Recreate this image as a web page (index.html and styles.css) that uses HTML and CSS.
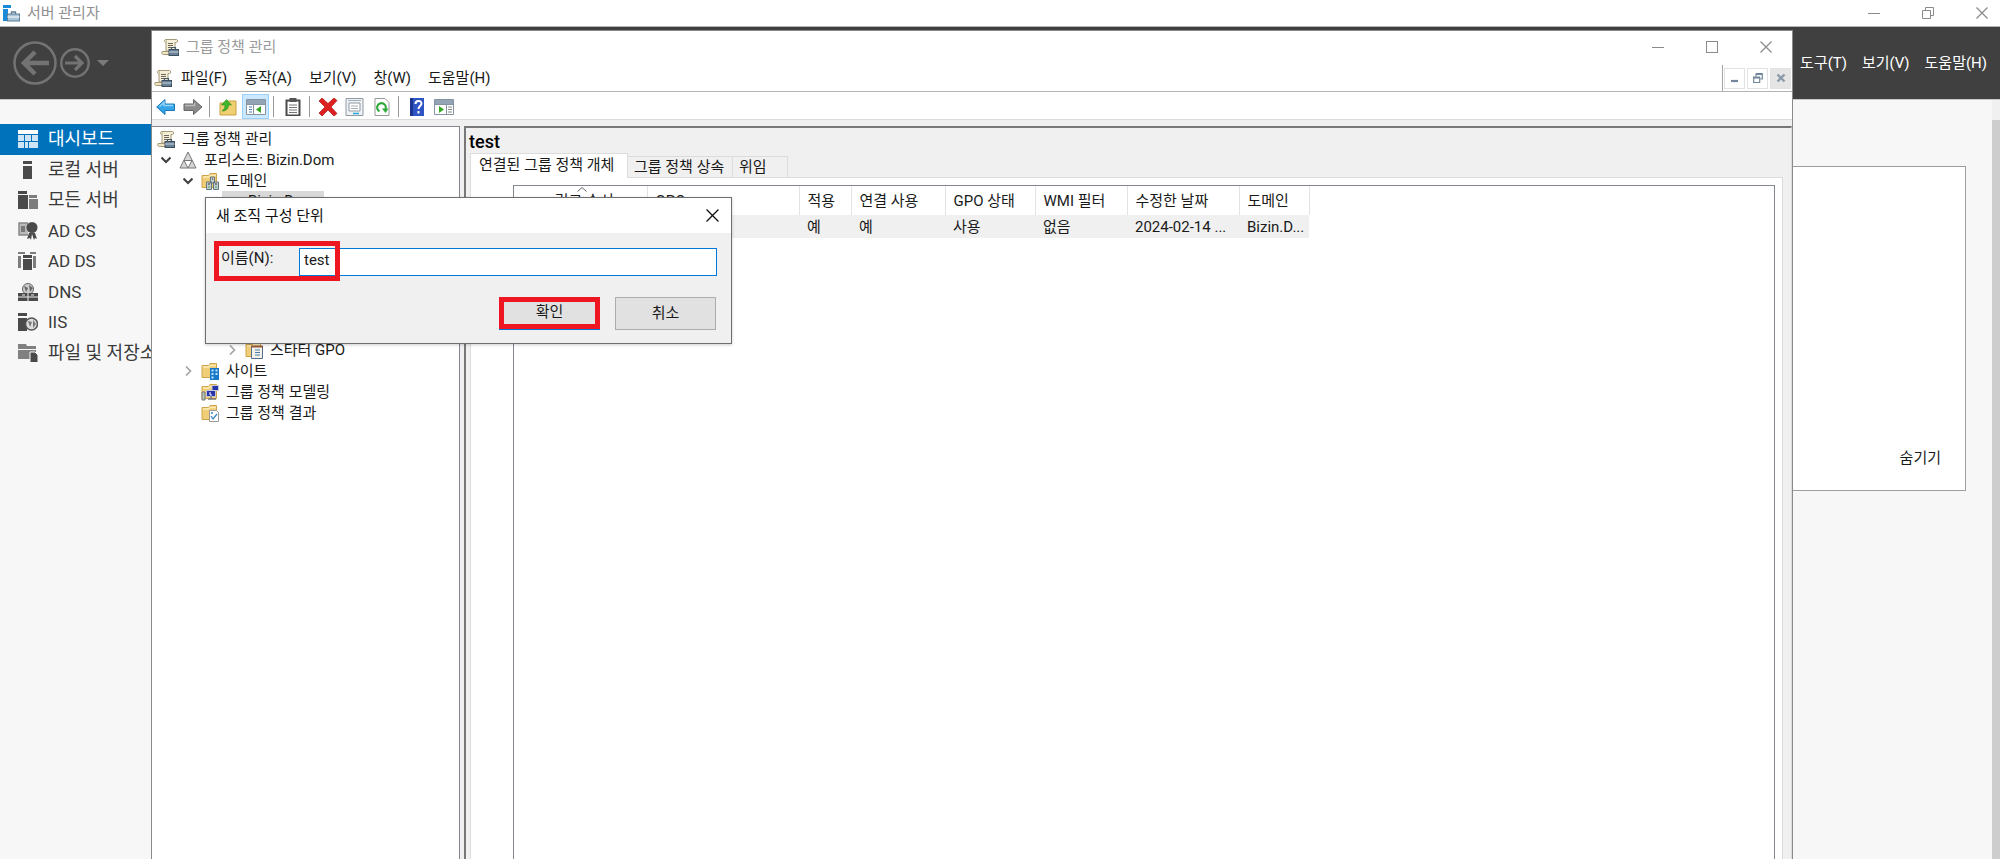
FILE: index.html
```html
<!DOCTYPE html>
<html lang="ko">
<head>
<meta charset="utf-8">
<title>서버 관리자</title>
<link rel="stylesheet" href="styles.css">
</head>
<body>
<svg class="defs" aria-hidden="true">
  <symbol id="scroll" viewBox="0 0 18 18">
    <path d="M5 1.500h10.500c1.500 0 1.500 3 0 3H14V13H5z" fill="#f6efd8" stroke="#a39878"/>
    <path d="M5 1.500c-2 0-2 3 0 3" fill="#efe4c0" stroke="#a39878"/>
    <path d="M7 5.500h5M7 7.500h5M7 9.500h3" stroke="#6b6657"/>
    <path d="M1 13.500h9v3H2.500C.5 16.500.5 14.500 1 13.500z" fill="#efe4c0" stroke="#a39878"/>
    <path d="M10.500 11V9.500h4V11" fill="none" stroke="#46596b" stroke-width="1.200"/>
    <rect x="8" y="11.500" width="9.500" height="6" fill="#6a8196" stroke="#3c4f60"/>
    <path d="M8 14h9.500" stroke="#c9d5de"/>
  </symbol>
  <symbol id="folder" viewBox="0 0 18 18">
    <path d="M1 3.500h7l1-2h6.500v14H1z" fill="#f0ce78" stroke="#d0a548"/>
    <path d="M2 5h5.500l1.500-1.500H15" fill="none" stroke="#fbeab8" stroke-width="1.500"/>
  </symbol>
  <symbol id="open" viewBox="0 0 10 10"><path d="M.5 2.500L5 7l4.500-4.500" fill="none" stroke="#404040" stroke-width="2"/></symbol>
  <symbol id="shut" viewBox="0 0 10 10"><path d="M3 .5L7.500 5 3 9.500" fill="none" stroke="#a6a6a6" stroke-width="1.700"/></symbol>
  <symbol id="min" viewBox="0 0 12 12"><path d="M0 6.500h12" stroke="currentColor" fill="none"/></symbol>
  <symbol id="max" viewBox="0 0 12 12"><rect x=".5" y=".5" width="11" height="11" stroke="currentColor" fill="none"/></symbol>
  <symbol id="restore" viewBox="0 0 12 12"><path d="M.5 3.500h8v8h-8zM3.500 3V.5h8v8H9" stroke="currentColor" fill="none"/></symbol>
  <symbol id="close" viewBox="0 0 12 12"><path d="M.5.5l11 11M11.500.5l-11 11" stroke="currentColor" fill="none" stroke-width="1.200"/></symbol>
</svg>

<div class="manager">
  <header class="titlebar">
    <svg class="app-icon" viewBox="0 0 17 17"><path d="M0 0h8v3H0zM0 4h5v12H0z" fill="#1a8ad8"/><path d="M8.500 9V7h4v2" fill="none" stroke="#5b7c96" stroke-width="1.300"/><rect x="4.500" y="9" width="12" height="7" fill="#a9c4d6" stroke="#5b7c96"/><path d="M4.500 12h12" stroke="#fff"/></svg>
    <span class="titlebar-text">서버 관리자</span>
    <div class="controls">
      <button aria-label="최소화"><svg><use href="#min"/></svg></button>
      <button aria-label="이전 크기로"><svg><use href="#restore"/></svg></button>
      <button aria-label="닫기"><svg><use href="#close"/></svg></button>
    </div>
  </header>
  <div class="banner">
    <button class="nav-big" aria-label="뒤로"><svg viewBox="0 0 44 44"><circle cx="22" cy="22" r="20.500" fill="none" stroke="#737373" stroke-width="2.500"/><path d="M36 22H12M22 11L11 22l11 11" fill="none" stroke="#737373" stroke-width="4.500"/></svg></button>
    <button class="nav-small" aria-label="앞으로"><svg viewBox="0 0 30 30"><circle cx="15" cy="15" r="13.700" fill="none" stroke="#737373" stroke-width="2.400"/><path d="M5 15h17M15 8l7 7-7 7" fill="none" stroke="#737373" stroke-width="3.200"/></svg></button>
    <button class="nav-drop" aria-label="기록"><svg viewBox="0 0 12 8"><path d="M0 1h12L6 7z" fill="#7a7a7a"/></svg></button>
    <nav class="banner-menu"><button>도구(T)</button><button>보기(V)</button><button>도움말(H)</button></nav>
  </div>
  <div class="manager-body">
    <nav class="side">
      <a href="#" class="ko current"><svg viewBox="0 0 20 18"><path d="M0 0h20v4H0z" fill="#fff"/><path d="M0 5h6v6H0zM0 12h6v6H0zM7 5h6v6H7zM14 5h6v6h-6zM7 12h3v6H7zM11 12h9v6h-9z" fill="#cfe4f5"/></svg>대시보드</a>
      <a href="#" class="ko"><svg viewBox="0 0 20 18"><path d="M5 0h9v3H5zM5 5h9v13H5z" fill="#4a4a4a"/></svg>로컬 서버</a>
      <a href="#" class="ko"><svg viewBox="0 0 20 18"><path d="M0 0h9v3H0zM0 4h10v14H0z" fill="#4a4a4a"/><path d="M11 4h8v3h-8zM11 8h9v10h-9z" fill="#7d7d7d"/></svg>모든 서버</a>
      <a href="#"><svg viewBox="0 0 20 18"><path d="M10 1H1v12h9" fill="#bbb" stroke="#888" stroke-width="1.500"/><path d="M3 4h4v6H3z" fill="#777"/><circle cx="14" cy="5.500" r="5.500" fill="#4a4a4a"/><path d="M11 11l-2 6 3-1 1 2 1-6 2 6 1-2 2 1-2-6z" fill="#4a4a4a"/></svg>AD CS</a>
      <a href="#"><svg viewBox="0 0 20 18"><path d="M0 0h7v2H0zM0 4h3v12H0zM12 0h6v2h-6zM15 4h3v12h-3z" fill="#7d7d7d"/><path d="M5 3h9v3H5zM5 7h9v11H5z" fill="#4a4a4a"/></svg>AD DS</a>
      <a href="#"><svg viewBox="0 0 20 18"><circle cx="10" cy="6" r="5.500" fill="#ccc" stroke="#666"/><path d="M6 3l4 2-2 4zM11 2l4 3-3 4z" fill="#666"/><path d="M0 10h20v8H0z" fill="#4a4a4a"/><path d="M0 14h20M10 10v8M4 12h3M13 12h3" stroke="#eee"/></svg>DNS</a>
      <a href="#"><svg viewBox="0 0 20 18"><path d="M0 0h9v3H0zM0 5h9v13H0z" fill="#4a4a4a"/><circle cx="13.500" cy="11" r="6" fill="#ddd" stroke="#555" stroke-width="1.500"/><path d="M10 8l4 1-2 5zM15 7l3 4-3 4z" fill="#777"/></svg>IIS</a>
      <a href="#" class="ko"><svg viewBox="0 0 20 18"><path d="M0 0h8l1 2h9v3H0zM0 6h18v2h-6v7H0z" fill="#808080"/><path d="M12 8h5l3 3v8h-8z" fill="#4a4a4a" stroke="#f7f7f7"/></svg>파일 및 저장소</a>
    </nav>
    <main class="dash"><section class="welcome"><button>숨기기</button></section></main>
    <div class="scrollbar"><i></i></div>
  </div>
</div>

<div class="gpm">
  <header class="gpm-title">
    <svg class="icon"><use href="#scroll"/></svg><span class="titlebar-text">그룹 정책 관리</span>
    <div class="controls">
      <button aria-label="최소화"><svg><use href="#min"/></svg></button>
      <button aria-label="최대화"><svg><use href="#max"/></svg></button>
      <button aria-label="닫기"><svg><use href="#close"/></svg></button>
    </div>
  </header>
  <div class="menubar">
    <svg class="icon"><use href="#scroll"/></svg>
    <nav class="menus"><button>파일(F)</button><button>동작(A)</button><button>보기(V)</button><button>창(W)</button><button>도움말(H)</button></nav>
    <div class="mdi">
      <button aria-label="창 최소화"><svg viewBox="0 0 10 10"><path d="M1 8h7" stroke="#71859b" stroke-width="2.200"/></svg></button>
      <button aria-label="창 복원"><svg viewBox="0 0 10 10"><path d="M.7 4.500h6v5h-6zM3 3.500V1h6.300v5H7.500" fill="none" stroke="#71859b" stroke-width="1.200"/><path d="M0 4.500h7M3 1h6.500" stroke="#71859b" stroke-width="2"/></svg></button>
      <button class="off" aria-label="창 닫기"><svg viewBox="0 0 10 10"><path d="M1.500 1.500l7 7M8.500 1.500l-7 7" stroke="#8a9bab" stroke-width="2.400"/></svg></button>
    </div>
  </div>
  <div class="toolbar">
    <button aria-label="뒤로"><svg viewBox="0 0 20 18"><path d="M.7 9L9 1.500V6h9.500v6.500H9v4z" fill="#35a5e6" stroke="#1d78b8"/><path d="M3.500 8.500L8 4.500V7.500h9" fill="none" stroke="#8fd4f8" stroke-width="1.500"/></svg></button>
    <button class="gap-s" aria-label="앞으로"><svg viewBox="0 0 20 18"><path d="M19 9l-8.500-7.500V6H1v6.500h9.500v4z" fill="#8b8b8b" stroke="#666"/><path d="M2 7.500h9.500V5" fill="none" stroke="#bbb" stroke-width="1.500"/></svg></button>
    <hr>
    <button class="gap-m" aria-label="위로"><svg viewBox="0 0 20 18"><path d="M2 5h6l2-2h8v14H2z" fill="#f0cf73" stroke="#c9a145"/><path d="M4 13c2-1 3-4 3-6H3.500l5-5.500 5 5.500H10.500c0 4-2.500 6-6.500 6z" fill="#41b52c" stroke="#2a8c1b" stroke-width=".6"/></svg></button>
    <button class="on" aria-label="콘솔 트리 표시"><svg viewBox="0 0 20 18"><path d="M.5 1.500h19v15H.5z" fill="#fff" stroke="#8693a3"/><path d="M1 2h18v4H1z" fill="#94a3b5"/><path d="M7.500 6v11M1 6.500h18" stroke="#8693a3"/><path d="M3 9h3M3 11.500h3M3 14h3" stroke="#4d7fb5"/><path d="M15 8v7l-5-3.500z" fill="#35a822"/></svg></button>
    <hr>
    <button class="gap-s" aria-label="붙여넣기"><svg viewBox="0 0 20 18"><path d="M3.500 2.500h13v15h-13z" fill="#fff" stroke="#4a4a4a" stroke-width="2"/><path d="M6.500 0h7v4h-7z" fill="#555"/><path d="M6 7h8M6 9.500h8M6 12h8M6 14.500h8" stroke="#777"/></svg></button>
    <hr>
    <button class="gap-m" aria-label="삭제"><svg viewBox="0 0 20 18"><path d="M1 3l3-3 6 5.500L16 0l3 2.500L13 9l6 6.500-3 2.500-6-6-6 6-3-3L7 9z" fill="#df2020" stroke="#a91111" stroke-width=".7"/></svg></button>
    <button class="gap-s" aria-label="속성"><svg viewBox="0 0 20 18"><path d="M1 .5h17v17H1z" fill="#eef2f5" stroke="#8f99a3"/><path d="M4 5h11v8H4z" fill="#fff" stroke="#8f99a3"/><path d="M3 2.500h13M6 8h7M6 10.500h7" stroke="#a5afb8"/><path d="M8 15.500h6" stroke="#28a4df" stroke-width="1.500"/></svg></button>
    <button class="gap-s" aria-label="새로 고침"><svg viewBox="0 0 20 18"><path d="M3 .5h10l4 4v13H3z" fill="#fff" stroke="#999"/><path d="M7.500 13.300a4.300 4.300 0 1 1 6-2.300" fill="none" stroke="#2fa83a" stroke-width="2.200"/><path d="M10 10.500h6.500l-3 4.500z" fill="#2fa83a"/></svg></button>
    <hr>
    <button class="gap-m" aria-label="도움말"><svg viewBox="0 0 20 18"><path d="M3 0h14v18H3z" fill="#2f55c4"/><path d="M3 0h3v18H3z" fill="#1b3690"/><path d="M8.500 6c0-4 6-4 6-.5 0 2.500-3 2.500-3 5.500M11.500 13v2.500" fill="none" stroke="#fff" stroke-width="2"/></svg></button>
    <button class="gap-s" aria-label="작업 창 표시"><svg viewBox="0 0 20 18"><path d="M.5 1.500h19v15H.5z" fill="#fff" stroke="#8693a3"/><path d="M1 2h18v4H1z" fill="#94a3b5"/><path d="M12.500 6v11M1 6.500h18" stroke="#8693a3"/><path d="M14 9h4M14 11.500h4M14 14h4" stroke="#888"/><path d="M5 8v7l5-3.500z" fill="#35a822"/></svg></button>
  </div>
  <div class="panes">
    <div class="tree">
      <div class="node root"><svg class="icon"><use href="#scroll"/></svg>그룹 정책 관리</div>
      <div class="node l1"><svg class="arrow"><use href="#open"/></svg><svg class="icon" viewBox="0 0 18 18"><path d="M9 1l8 16H1z" fill="#d6d6d6" stroke="#777"/><path d="M5 9.500h8L9 17z" fill="#fff" stroke="#777"/></svg>포리스트: Bizin.Dom</div>
      <div class="node l2"><svg class="arrow"><use href="#open"/></svg><svg class="icon" viewBox="0 0 18 18"><use href="#folder"/><path d="M9.500 5h4v6h-4zM5.500 10h5v7.500h-5zM12.500 10h5v7.500h-5z" fill="#c3ced2" stroke="#65757c"/><path d="M7 12h2M14 12h2M11 7h1" stroke="#333"/><path d="M7 15h2M14 15h2" stroke="#44a53c"/></svg>도메인</div>
      <div class="node l3"><svg class="icon" viewBox="0 0 18 18"><path d="M6 1h7v16H6z" fill="#b8c8d0" stroke="#65757c"/></svg><span class="picked">Bizin.Dom</span></div>
      <div class="node l4 starter"><svg class="arrow"><use href="#shut"/></svg><svg class="icon" viewBox="0 0 18 18"><use href="#folder"/><path d="M6.500 5.500h11v12h-11z" fill="#f5f1e8" stroke="#506f8d"/><path d="M6 5.500h12" stroke="#935b42" stroke-width="2"/><path d="M10 9h5M10 11.500h5M10 14h5" stroke="#477eae"/></svg>스타터 GPO</div>
      <div class="node l2"><svg class="arrow"><use href="#shut"/></svg><svg class="icon" viewBox="0 0 18 18"><use href="#folder"/><path d="M9 6h9v12H9z" fill="#1878c8"/><path d="M10.500 8.500h2M14.500 8.500h2M10.500 12h2M14.500 12h2M10.500 15.500h2" stroke="#bfe5ff" stroke-width="2"/></svg>사이트</div>
      <div class="node l2"><svg class="icon" viewBox="0 0 18 18"><use href="#folder"/><path d="M11 2.500h6.500v5H11zM5.500 7.500h9v6h-9z" fill="#2735a8" stroke="#c5cad8"/><path d="M1 9h3v8H1z" fill="#b6c6b6" stroke="#777"/><path d="M7 16h8M10 13v3" stroke="#777" stroke-width="1.500"/><path d="M9 9v3h2" stroke="#fff" fill="none"/></svg>그룹 정책 모델링</div>
      <div class="node l2"><svg class="icon" viewBox="0 0 18 18"><use href="#folder"/><path d="M8.500 6.500h7l2 2v9h-9z" fill="#fff" stroke="#999"/><path d="M10 12l2 3 4-5M10 9h2" fill="none" stroke="#3a85c0" stroke-width="1.300"/></svg>그룹 정책 결과</div>
    </div>
    <section class="detail">
      <h1>test</h1>
      <div class="tabs" role="tablist"><button class="tab active" role="tab">연결된 그룹 정책 개체</button><button class="tab t2" role="tab">그룹 정책 상속</button><button class="tab t3" role="tab">위임</button></div>
      <div class="sheet">
        <div class="list">
          <table>
            <colgroup><col class="c1"><col class="c2"><col class="c3"><col class="c4"><col class="c5"><col class="c6"><col class="c7"><col class="c8"></colgroup>
            <thead><tr><th class="mid"><svg class="sort" viewBox="0 0 10 5"><path d="M.5 4.500L5 .5l4.500 4" fill="none" stroke="#666"/></svg>링크 순서</th><th>GPO</th><th>적용</th><th>연결 사용</th><th>GPO 상태</th><th>WMI 필터</th><th>수정한 날짜</th><th>도메인</th></tr></thead>
            <tbody><tr><td></td><td></td><td>예</td><td>예</td><td>사용</td><td>없음</td><td>2024-02-14 ...</td><td>Bizin.D...</td></tr></tbody>
          </table>
        </div>
      </div>
    </section>
  </div>
</div>

<form class="dialog" role="dialog" aria-label="새 조직 구성 단위">
  <header class="dialog-title"><span>새 조직 구성 단위</span><button type="button" aria-label="닫기"><svg><use href="#close"/></svg></button></header>
  <div class="dialog-row">
    <label for="ou">이름(N):</label><input id="ou" type="text" value="test">
    <div class="mark"></div>
  </div>
  <div class="dialog-actions"><button class="ok" type="button">확인</button><button type="button">취소</button></div>
</form>
</body>
</html>
```
FILE: styles.css
```css
* { box-sizing: border-box; }
body { margin: 0; height: 100vh; overflow: hidden; position: relative; background: #f7f7f7; color: #1a1a1a; font: 15px/20px Roboto, "Noto Sans CJK KR", sans-serif; }
button { font: inherit; color: inherit; background: none; border: 0; padding: 0; margin: 0; display: flex; align-items: center; justify-content: center; }
.defs { position: absolute; width: 0; height: 0; }
.icon { width: 18px; height: 18px; flex: none; }

.manager { height: 100%; display: flex; flex-direction: column; }
.titlebar { height: 27px; flex: none; display: flex; align-items: center; background: #fff; border-bottom: 1px solid #b5b5b5; padding-left: 3px; }
.app-icon { width: 17px; height: 17px; }
.titlebar-text { color: #8f8f8f; margin-left: 7px; }
.controls { margin-left: auto; display: flex; gap: 42px; color: #8a8a8a; }
.controls svg { width: 12px; height: 12px; display: block; }
.titlebar .controls { padding-right: 12px; }
.banner { height: 72px; flex: none; display: flex; align-items: center; background: #404040; padding: 0 13px; }
.nav-big svg { width: 44px; height: 44px; }
.nav-small { margin-left: 3px; }
.nav-small svg { width: 30px; height: 30px; }
.nav-drop { margin-left: 7px; }
.nav-drop svg { width: 12px; height: 8px; }
.banner-menu { margin-left: auto; display: flex; gap: 15px; color: #fff; }
.manager-body { flex: 1; display: flex; border-top: 1px solid #c8c8c8; }
.side { width: 210px; padding-top: 24px; display: grid; grid-auto-rows: 1fr; height: 268px; }
.side a { display: flex; align-items: center; gap: 10px; padding-left: 18px; color: #3b3b3b; font-size: 17px; text-decoration: none; white-space: nowrap; }
.side .ko { font-size: 18px; }
.side svg { width: 20px; height: 18px; }
.side .current { background: #0072bc; color: #fff; }
.dash { flex: 1; padding: 66px 26px 0 12px; }
.welcome { height: 325px; background: #fff; border: 1px solid #9e9e9e; display: flex; align-items: flex-end; justify-content: flex-end; padding: 22px 24px; }
.scrollbar { width: 8px; padding-top: 20px; background: #f0f0f0; }
.scrollbar i { display: block; height: 100%; background: #cdcdcd; }

.gpm { position: absolute; left: 151px; right: 207px; top: 30px; bottom: 0; display: flex; flex-direction: column; background: #f0f0f0; border: 1px solid #8a8a8a; border-bottom: 0; }
.gpm-title { height: 34px; display: flex; align-items: center; background: #fff; padding: 0 20px 2px 9px; }
.gpm-title .titlebar-text { color: #9a9a9a; }
.menubar { height: 27px; display: flex; align-items: center; background: #fff; border-bottom: 1px solid #b4b4b4; padding-left: 2px; }
.menus { display: flex; gap: 17px; margin-left: 9px; }
.mdi { margin-left: auto; align-self: stretch; display: flex; align-items: center; gap: 2px; border-left: 1px solid #a5a5a5; padding: 0 1px; }
.mdi button { width: 21px; height: 21px; border: 1px solid #e2e2e2; }
.mdi .off { background: #e5e5e5; }
.mdi svg { width: 10px; height: 10px; }
.toolbar { height: 28px; display: flex; align-items: center; background: #fff; border-bottom: 1px solid #dcdcdc; padding: 2px 0 0 4px; }
.toolbar svg { width: 20px; height: 18px; }
.toolbar hr { width: 1px; height: 21px; border: 0; margin: 0 2px 0 6px; background: #999; }
.toolbar .gap-s { margin-left: 7px; }
.toolbar .gap-m { margin-left: 6px; }
.toolbar .on { width: 27px; height: 25px; margin-left: 4px; margin-right: -2px; background: #cce8ff; border: 1px solid #99d1ff; }
.panes { flex: 1; display: flex; gap: 4px; margin-top: 6px; }
.tree { width: 308px; flex: none; background: #fff; border: 1px solid #828790; border-left: 0; border-bottom: 0; padding: 1px 0 0 5px; }
.node { height: 21px; display: flex; align-items: center; gap: 7px; white-space: nowrap; position: relative; }
.arrow { position: absolute; width: 10px; height: 10px; margin-left: -18px; }
.l1 { padding-left: 22px; }
.l2 { padding-left: 44px; }
.l3 { padding-left: 66px; }
.l4 { padding-left: 88px; }
.picked { background: #d9d9d9; line-height: 21px; margin-left: -26px; padding: 0 8px 0 26px; }
.starter { margin-top: 127px; }
.detail { flex: 1; display: flex; flex-direction: column; border: 2px solid #787878; border-right: 1px solid #dcdcdc; border-bottom: 0; padding: 0 8px 0 3px; }
h1 { margin: 3px 0 0; font-size: 18px; line-height: 22px; font-weight: 500; color: #000; }
.tabs { display: flex; align-items: flex-end; height: 24px; padding-left: 1px; }
.tab { height: 21px; border: 1px solid #dcdcdc; border-left: 0; border-bottom: 0; white-space: nowrap; justify-content: flex-start; padding-left: 6px; }
.tab.active { width: 158px; height: 25px; margin-bottom: -1px; background: #fff; border-left: 1px solid #dcdcdc; position: relative; padding: 0 0 3px 8px; }
.t2 { width: 105px; }
.t3 { width: 55px; }
.sheet { flex: 1; display: flex; background: #fff; border: 1px solid #dcdcdc; border-bottom: 0; padding: 7px 7px 0 42px; margin-left: 1px; }
.list { flex: 1; border: 1px solid #828790; border-bottom: 0; }
table { width: 795px; table-layout: fixed; border-collapse: collapse; }
th, td { padding: 0 0 0 8px; text-align: left; font-weight: 400; white-space: nowrap; }
th { height: 29px; border-right: 1px solid #e3e3e3; }
th.mid { text-align: center; position: relative; }
.sort { position: absolute; left: 63px; top: 1px; width: 10px; height: 5px; }
td { height: 23px; background: #f0f0f0; }
.c1 { width: 133px; }
.c2 { width: 152px; }
.c3 { width: 52px; }
.c4 { width: 94px; }
.c5 { width: 90px; }
.c6 { width: 92px; }
.c7 { width: 112px; }
.c8 { width: 70px; }

.dialog { position: absolute; left: 205px; top: 197px; width: 527px; background: #f0f0f0; border: 1px solid #6e6e6e; box-shadow: 0 1px 3px #0003; padding-bottom: 13px; }
.dialog-title { height: 35px; display: flex; align-items: center; justify-content: space-between; background: #fff; padding: 0 12px 0 10px; color: #111; }
.dialog-title svg { width: 13px; height: 13px; }
.dialog-row { display: flex; position: relative; padding: 15px 14px 0 15px; }
.dialog-row label { width: 78px; }
.dialog-row input { flex: 1; min-width: 0; height: 28px; border: 1px solid #0078d7; background: #fff; padding: 0 4px 4px; font: inherit; color: #1a1a1a; outline: 0; }
.mark { position: absolute; left: 8px; top: 8px; width: 126px; height: 40px; border: 5px solid #ee1620; }
.dialog-actions { display: flex; justify-content: flex-end; gap: 15px; padding: 21px 15px 0; }
.dialog-actions button { width: 101px; height: 33px; background: #e1e1e1; border: 1px solid #adadad; padding-bottom: 2px; }
.dialog-actions .ok { border: 5px solid #ee1620; box-shadow: 0 1px #0078d7; height: 32px; }
```
